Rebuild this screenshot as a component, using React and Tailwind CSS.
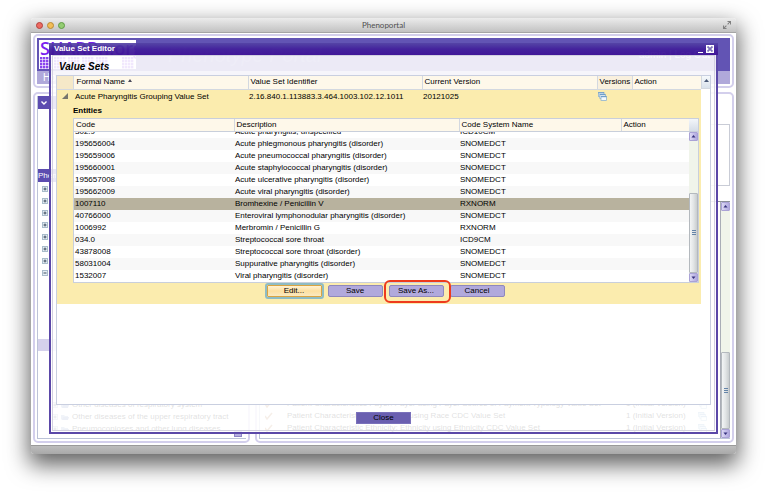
import React from "react";

const entities = [
  ["302.9", "Acute pharyngitis, unspecified", "ICD10CM"],
  ["195656004", "Acute phlegmonous pharyngitis (disorder)", "SNOMEDCT"],
  ["195659006", "Acute pneumococcal pharyngitis (disorder)", "SNOMEDCT"],
  ["195660001", "Acute staphylococcal pharyngitis (disorder)", "SNOMEDCT"],
  ["195657008", "Acute ulcerative pharyngitis (disorder)", "SNOMEDCT"],
  ["195662009", "Acute viral pharyngitis (disorder)", "SNOMEDCT"],
  ["1007110", "Bromhexine / Penicillin V", "RXNORM"],
  ["40766000", "Enteroviral lymphonodular pharyngitis (disorder)", "SNOMEDCT"],
  ["1006992", "Merbromin / Penicillin G", "RXNORM"],
  ["034.0", "Streptococcal sore throat", "ICD9CM"],
  ["43878008", "Streptococcal sore throat (disorder)", "SNOMEDCT"],
  ["58031004", "Suppurative pharyngitis (disorder)", "SNOMEDCT"],
  ["1532007", "Viral pharyngitis (disorder)", "SNOMEDCT"],
];
const selectedCode = "1007110";

const closedNodes = [0, 1, 2, 3, 4, 5, 6];
const hiddenNodes = [0, 1, 2, 3, 4];
const diseases = [
  "Other diseases of respiratory system",
  "Other diseases of the upper respiratory tract",
  "Pneumoconioses and other lung diseases",
];

const library = [
  "Patient Characteristics Payer: Payer using Payer Source of Payment Typology Value Set",
  "Patient Characteristic Race: Race using Race CDC Value Set",
  "Patient Characteristic Ethnicity: Ethnicity using Ethnicity CDC Value Set",
];

function TreeToggle({ open = false }) {
  return (
    <svg className="h-[6px] w-[6px] shrink-0" viewBox="0 0 6 6" aria-hidden="true">
      <rect x="0.5" y="0.5" width="5" height="5" fill="#e6eef4" stroke="#a9bccb" />
      <path d={open ? "M1.500 3h3" : "M1.500 3h3M3 1.500v3"} stroke="#3d4d60" strokeWidth="1" />
    </svg>
  );
}

function Folder() {
  return (
    <svg className="h-[6px] w-[8px] shrink-0" viewBox="0 0 8 6" aria-hidden="true">
      <path d="M0 5.500V1h3l1 1h3v3.500z" fill="#8ea2cf" />
      <path d="M1 6l1-3h6l-1 3z" fill="#6f80bd" />
    </svg>
  );
}

function Versions() {
  return (
    <svg className="h-[9px] w-[9px]" viewBox="0 0 9 9" aria-hidden="true">
      <g fill="#f3f9fd" stroke="#7fa9cd" strokeWidth="0.7">
        <rect x="0.5" y="0.5" width="5.500" height="4" />
        <rect x="1.800" y="2.300" width="5.500" height="4" />
        <rect x="3" y="4.300" width="5.500" height="4.200" />
      </g>
      <path d="M0.500 0.900h5.500M1.800 2.700h5.500M3 4.700h5.500" stroke="#5e92c2" strokeWidth="0.9" />
    </svg>
  );
}

function ScrollArrow({ down = false }) {
  return (
    <div className="flex h-[9px] w-full shrink-0 items-center justify-center rounded-[1px] border border-[#aaa2d6] bg-gradient-to-r from-[#dcd8f4] to-[#afa7de]">
      <svg className="h-[3px] w-[5px]" viewBox="0 0 5 3" aria-hidden="true">
        <path d={down ? "M0.500 0.500h4L2.500 3z" : "M0.500 2.500h4L2.500 0z"} fill="#35307c" />
      </svg>
    </div>
  );
}

function Thumb({ className }) {
  return (
    <div
      className={
        "flex w-full shrink-0 items-center justify-center rounded-[1px] border border-[#b4b9be] bg-gradient-to-r from-[#f3f5f6] via-[#e2e5e6] to-[#c9cdcf] " +
        className
      }
    >
      <svg className="h-[5px] w-[4px]" viewBox="0 0 4 5" aria-hidden="true">
        <path d="M0 0.500h4M0 2.500h4M0 4.500h4" stroke="#6484a8" />
      </svg>
    </div>
  );
}

function Logo() {
  const blocks = [0, 14, 28, 42, 56, 82];
  return (
    <svg className="h-[29px] w-[97px] shrink-0" viewBox="0 0 97 29" role="img" aria-label="SHARPn.org">
      <rect width="97" height="29" fill="#fff" />
      <text x="1" y="15" fontSize="18" fontWeight="600" fontFamily="'Open Sans', 'Noto Sans', sans-serif" fill="#7a1ff0">
        SHARPn.org
      </text>
      {blocks.map((b) => (
        <g key={b} fill="#8a45ee">
          {[0, 1, 2, 3].map((r) =>
            [0, 1, 2, 3].map((c) => (
              <rect key={r + "-" + c} x={b + 1 + c * 3} y={17 + r * 3} width="2.400" height="2.400" />
            ))
          )}
        </g>
      ))}
    </svg>
  );
}

function PageHeader() {
  return (
    <header className="rounded-[5px] border-2 border-[#d3cfec] bg-white p-[2px]">
      <div className="flex h-[33px] items-center bg-[#6254b4] pl-[2px] pr-[20px]">
        <Logo />
        <h1 className="ml-[32px] grow text-[20px] italic leading-[24px] text-[#7568bf]">Phenotype Portal</h1>
        <div className="whitespace-nowrap text-[10px] leading-[12px] text-[#d8d3f0]">
          <span>admin</span> | <a href="#logout">Log Out</a>
        </div>
      </div>
      <nav className="flex h-[13px] items-center bg-[#b0a9da] pl-[6px] text-[10px] leading-[12px] text-white">
        <a href="#home">Home</a>
      </nav>
    </header>
  );
}

function Sidebar() {
  return (
    <aside className="flex w-[217px] shrink-0 flex-col rounded-[5px] border-2 border-[#d3cfec] bg-white p-[2px]">
      <div className="flex min-h-0 grow flex-col border-b border-l border-[#bcc3d8]">
        <div className="flex h-[13px] shrink-0 items-center bg-[#5c4cb0] pl-[3px]">
          <svg className="h-[4px] w-[6px]" viewBox="0 0 6 4" aria-hidden="true">
            <path d="M0.500 0.500L3 3l2.500-2.500" fill="none" stroke="#fff" strokeWidth="1.400" />
          </svg>
        </div>
        <div className="h-[60px] shrink-0" />
        <h2 className="h-[13px] shrink-0 bg-[#5c4cb0] text-[8px] leading-[13px] text-white">Phenotypes</h2>
        <div className="flex min-h-0 grow flex-col overflow-hidden pt-px text-[8px]">
          {closedNodes.map((n) => (
            <div key={n} className="flex h-[12px] shrink-0 items-center pl-[4px]">
              <TreeToggle />
            </div>
          ))}
          <div className="flex h-[12px] shrink-0 items-center pl-[4px]">
            <TreeToggle open />
          </div>
          {hiddenNodes.map((n) => (
            <div key={n} className="h-[12px] shrink-0" />
          ))}
          <div className="h-[12px] shrink-0 bg-[#d5d1ec]" />
          <div className="h-[48px] shrink-0" />
          {diseases.map((d) => (
            <div key={d} className="flex h-[12px] shrink-0 items-center pl-[14px]">
              <TreeToggle />
              <span className="ml-[3px] flex">
                <Folder />
              </span>
              <span className="ml-[3px] whitespace-nowrap leading-[12px]">{d}</span>
            </div>
          ))}
        </div>
        <div className="flex h-[7px] shrink-0 justify-end pr-[4px]">
          <div className="h-[6px] w-[8px] border border-[#8d84c6] bg-[#b5aedf]" />
        </div>
      </div>
    </aside>
  );
}

function Library() {
  return (
    <section className="flex min-w-0 grow flex-col rounded-[5px] border-2 border-[#d3cfec] bg-white p-[2px]">
      <div className="mt-[28px] h-[62px] shrink-0 border border-[#c9ccd6]" />
      <div className="mt-[15px] flex min-h-0 grow border-b border-l border-t border-b-[#bcc3d8] border-l-[#bcc3d8] border-t-[#8b8f98]">
        <div className="flex min-w-0 grow flex-col justify-end pb-[4px]">
          {library.map((name) => (
            <div key={name} className="flex h-[12px] items-center pl-[5px] text-[8px] leading-[12px]">
              <svg className="h-[8px] w-[8px] shrink-0" viewBox="0 0 8 8" aria-hidden="true">
                <path d="M0 4l2 3 5-6" fill="none" stroke="#b07a4a" strokeWidth="1.500" />
              </svg>
              <span className="ml-[14px] grow whitespace-nowrap">{name}</span>
              <span className="w-[72px] shrink-0 whitespace-nowrap">1 (Initial Version)</span>
              <span className="w-[22px] shrink-0">
                <Versions />
              </span>
            </div>
          ))}
        </div>
        <div className="flex w-[10px] shrink-0 flex-col border-l border-[#a9adb6] bg-[#f0f4ea]">
          <ScrollArrow />
          <div className="grow" />
          <Thumb className="h-[77px]" />
          <ScrollArrow down />
        </div>
      </div>
    </section>
  );
}

function EntityCols() {
  return (
    <colgroup>
      <col className="w-[160px]" />
      <col className="w-[225px]" />
      <col className="w-[162px]" />
      <col />
    </colgroup>
  );
}

function EntityTable() {
  return (
    <div className="mr-[2px] flex h-[165px] flex-col border border-[#c9cfdb] bg-white">
      <div className="flex h-[13px] shrink-0 border-b border-[#c9cfdb]">
        <table className="grow table-fixed border-collapse">
          <EntityCols />
          <thead>
            <tr className="h-[12px] bg-[#fef8ea] text-left leading-[12px]">
              <th className="border-r border-[#d3d8e0] p-0 pl-[2px] font-normal">Code</th>
              <th className="border-r border-[#d3d8e0] p-0 pl-[2px] font-normal">Description</th>
              <th className="border-r border-[#d3d8e0] p-0 pl-[2px] font-normal">Code System Name</th>
              <th className="p-0 pl-[2px] font-normal">Action</th>
            </tr>
          </thead>
        </table>
        <div className="w-[9px] shrink-0 bg-gradient-to-b from-[#f3f6fa] to-[#d5dde8]" />
      </div>
      <div className="flex min-h-0 grow">
        <div className="flex min-w-0 grow flex-col justify-end overflow-hidden">
          <table className="w-full shrink-0 table-fixed border-collapse">
            <EntityCols />
            <tbody>
              {entities.map(([code, description, system], i) => (
                <tr
                  key={code}
                  className={
                    "h-[12px] whitespace-nowrap leading-[12px] " +
                    (code === selectedCode ? "bg-[#b8b29e]" : i % 2 ? "bg-[#f8f8f8]" : "bg-white")
                  }
                >
                  <td className="p-0 pl-px">{code}</td>
                  <td className="p-0 pl-px">{description}</td>
                  <td className="p-0 pl-px">{system}</td>
                  <td className="p-0" />
                </tr>
              ))}
            </tbody>
          </table>
        </div>
        <div className="flex w-[9px] shrink-0 flex-col bg-[#f0f4ea]">
          <ScrollArrow />
          <div className="grow" />
          <Thumb className="h-[80px]" />
          <ScrollArrow down />
        </div>
      </div>
    </div>
  );
}

const actionButton =
  "h-[12px] w-[55px] rounded-[2px] border border-[#8f88bd] bg-[#b1a9dc] text-center text-[8px] leading-[10px] text-black";

function ValueSetGrid() {
  return (
    <div className="flex min-h-0 grow border border-[#c9cfe0] bg-white text-[8px]">
      <div className="min-w-0 grow">
        <table className="w-full table-fixed border-collapse">
          <colgroup>
            <col className="w-[16px]" />
            <col className="w-[175px]" />
            <col className="w-[174px]" />
            <col className="w-[175px]" />
            <col className="w-[35px]" />
            <col />
          </colgroup>
          <thead>
            <tr className="h-[13px] bg-[#fef8ea] text-left leading-[12px]">
              <th className="border-b border-r border-[#d3d8e0] bg-[#f5e8c8] p-0" aria-label="Expand" />
              <th className="border-b border-r border-[#d3d8e0] p-0 pl-[3px] font-normal">
                <span className="flex items-center gap-[3px]">
                  Formal Name
                  <svg className="mb-[4px] h-[3px] w-[4px]" viewBox="0 0 4 3" aria-hidden="true">
                    <path d="M0 3h4L2 0z" fill="#4a4a5a" />
                  </svg>
                </span>
              </th>
              <th className="border-b border-r border-[#d3d8e0] p-0 pl-[2px] font-normal">Value Set Identifier</th>
              <th className="border-b border-r border-[#d3d8e0] p-0 pl-[2px] font-normal">Current Version</th>
              <th className="border-b border-r border-[#d3d8e0] bg-[#f9f0de] p-0 pl-[2px] font-normal">Versions</th>
              <th className="border-b border-[#d3d8e0] p-0 pl-[2px] font-normal">Action</th>
            </tr>
          </thead>
          <tbody className="bg-[#fbecae]">
            <tr className="h-[13px] leading-[13px]">
              <td className="p-0 pl-[5px]">
                <svg className="h-[6px] w-[6px]" viewBox="0 0 6 6" aria-hidden="true">
                  <path d="M6 0v6H0z" fill="#77766e" />
                </svg>
              </td>
              <td className="p-0 pl-[2px]">Acute Pharyngitis Grouping Value Set</td>
              <td className="p-0 pl-px">2.16.840.1.113883.3.464.1003.102.12.1011</td>
              <td className="p-0 pl-px">20121025</td>
              <td className="p-0 pl-px">
                <Versions />
              </td>
              <td className="p-0" />
            </tr>
            <tr>
              <td className="p-0" />
              <td className="p-0" colSpan={5}>
                <h3 className="h-[15px] text-[8px] font-bold leading-[16px]">Entities</h3>
                <EntityTable />
                <div className="mr-[3px] flex h-[21px] items-start justify-center gap-[6px] pt-[2px]">
                  <button
                    type="button"
                    className="h-[12px] w-[55px] rounded-[1px] border border-[#d9a441] bg-gradient-to-b from-[#fff1d2] via-[#fde0a0] to-[#fbe9c0] text-center text-[8px] leading-[10px] text-black outline-2 outline-[#8fbcc4]"
                  >
                    Edit...
                  </button>
                  <button type="button" className={actionButton}>
                    Save
                  </button>
                  <div className="relative flex">
                    <button type="button" className={actionButton}>
                      Save As...
                    </button>
                    <div className="pointer-events-none absolute -bottom-[6px] -left-[5px] -right-[7px] -top-[5px] z-10 rounded-[6px] border-2 border-[#ee3a1c]" />
                  </div>
                  <button type="button" className={actionButton}>
                    Cancel
                  </button>
                </div>
              </td>
            </tr>
          </tbody>
        </table>
      </div>
      <div className="w-[9px] shrink-0">
        <div className="flex h-[13px] items-center justify-center border-b border-l border-[#d3d8e0] bg-gradient-to-b from-[#f6f9fc] to-[#d9e2ec]">
          <svg className="mb-[4px] h-[3px] w-[5px]" viewBox="0 0 5 3" aria-hidden="true">
            <path d="M0 3h5L2.500 0z" fill="#4a5a78" />
          </svg>
        </div>
      </div>
    </div>
  );
}

function ValueSetEditor() {
  return (
    <div
      role="dialog"
      aria-labelledby="editor-title"
      className="absolute bottom-[11px] left-[18px] right-[18px] top-[10px] flex flex-col"
    >
      <div className="flex h-[12px] shrink-0 items-center bg-gradient-to-b from-[#5342a4]/90 via-[#43209b]/95 to-[#3f1497]/95 pl-[5px] pr-[4px]">
        <h2 id="editor-title" className="grow text-[8px] font-bold leading-[12px] text-white">
          Value Set Editor
        </h2>
        <button type="button" aria-label="Minimize" className="mr-[3px] flex h-[8px] w-[5px] items-end">
          <span className="h-px w-full bg-white" />
        </button>
        <button type="button" aria-label="Close window" className="flex h-[8px] w-[8px] items-center justify-center bg-white">
          <svg className="h-[6px] w-[6px]" viewBox="0 0 6 6" aria-hidden="true">
            <path d="M0.500 0.500l5 5M5.500 0.500l-5 5" stroke="#7d74ba" strokeWidth="1.800" />
          </svg>
        </button>
      </div>
      <div className="flex min-h-0 grow flex-col border-x-2 border-b-2 border-[#5b48a8] bg-white/88 px-px pb-px">
        <div className="flex min-h-0 grow flex-col border border-[#d2d0e0] px-[3px]">
          <h3 className="h-[19px] shrink-0 pl-[3px] text-[10px] font-bold italic leading-[22px]">Value Sets</h3>
          <ValueSetGrid />
          <div className="flex h-[25px] shrink-0 items-center justify-center">
            <button
              type="button"
              className="h-[12px] w-[55px] border border-[#7a71bb] bg-[#6a5fb0] text-center text-[8px] leading-[10px] text-black"
            >
              Close
            </button>
          </div>
        </div>
      </div>
    </div>
  );
}

function TitleBar() {
  return (
    <div className="flex h-[15px] shrink-0 items-center rounded-t-[3px] border-b border-[#a5a5a5] bg-gradient-to-b from-[#ececec] to-[#c2c2c2] px-[5px]">
      <div className="flex w-[40px] gap-[4px]">
        <span className="h-[7px] w-[7px] rounded-full border border-[#b0403c] bg-[#ee6a62]" />
        <span className="h-[7px] w-[7px] rounded-full border border-[#b98a35] bg-[#f3bd56]" />
        <span className="h-[7px] w-[7px] rounded-full border border-[#5f9a45] bg-[#94cd72]" />
      </div>
      <div className="grow text-center font-['Lato','Noto_Sans',sans-serif] text-[8px] leading-[14px] text-[#505050]">
        Phenoportal
      </div>
      <div className="flex w-[40px] justify-end">
        <svg className="h-[8px] w-[8px]" viewBox="0 0 8 8" aria-hidden="true">
          <path
            d="M4.500 0.500h3v3M7.300 0.700L4.600 3.400M3.500 7.500h-3v-3M0.700 7.300L3.400 4.600"
            fill="none"
            stroke="#808080"
            strokeWidth="1.100"
          />
        </svg>
      </div>
    </div>
  );
}

export default function App() {
  return (
    <div className="flex h-screen flex-col overflow-hidden bg-white pb-[44px] pl-[31px] pr-[31px] pt-[18px] font-['Liberation_Sans',Arial,sans-serif] text-black">
      <div className="flex min-h-0 grow flex-col rounded-[3px] shadow-[0_9px_22px_2px_rgba(0,0,0,0.62)]">
        <TitleBar />
        <div className="relative flex min-h-0 grow flex-col gap-[4px] bg-white px-[2px] pb-[2px] pt-px">
          <PageHeader />
          <main className="flex min-h-0 grow gap-[5px]">
            <Sidebar />
            <Library />
          </main>
          <ValueSetEditor />
        </div>
        <div className="h-[9px] shrink-0 rounded-b-[3px] border-t border-[#9a9a9a] bg-gradient-to-b from-[#bdbdbd] to-[#a9a9a9]" />
      </div>
    </div>
  );
}
